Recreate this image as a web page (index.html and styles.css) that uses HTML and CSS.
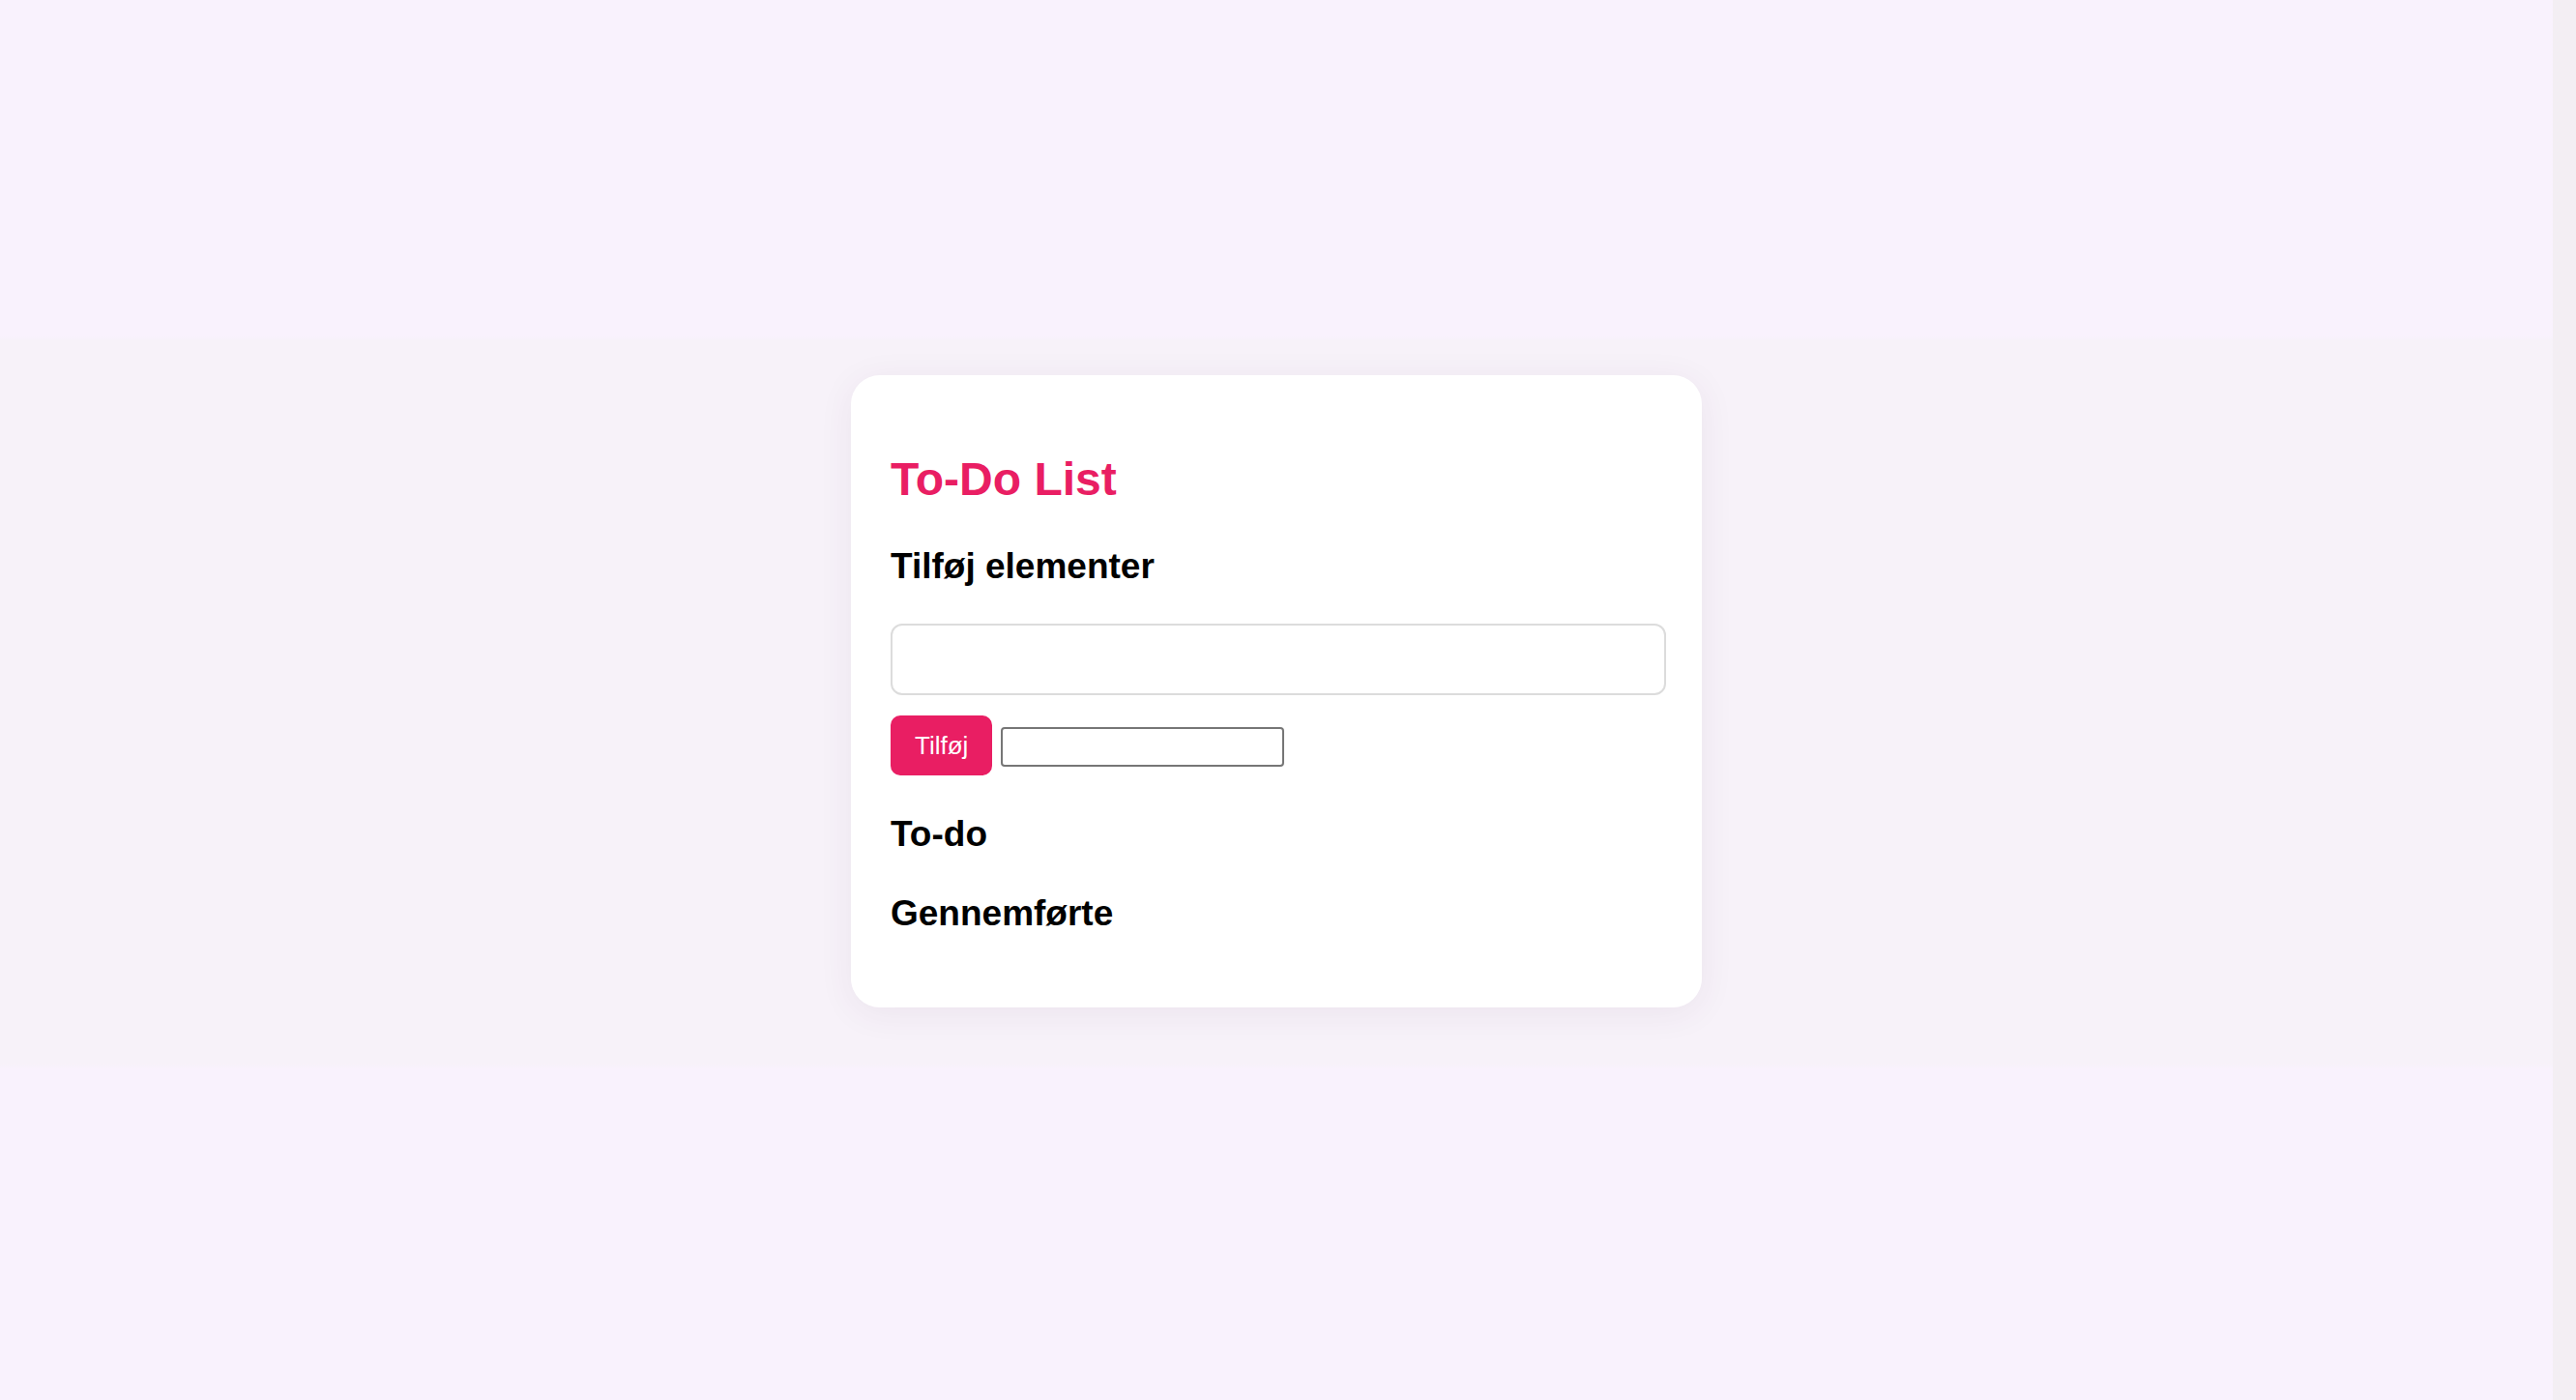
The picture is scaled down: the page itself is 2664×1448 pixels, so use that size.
FILE: index.html
```html
<!DOCTYPE html>
<html lang="da">
<head>
<meta charset="utf-8">
<title>To-Do List</title>
<link rel="stylesheet" href="styles.css">
</head>
<body>
<main class="page">
  <section class="card">
    <h1 class="title">To-Do List</h1>
    <h2 class="heading heading-add">Tilføj elementer</h2>
    <input class="big-input" type="text">
    <div class="row">
      <button class="add-btn" type="button">Tilføj</button>
      <input class="small-input" type="text">
    </div>
    <h2 class="heading heading-list">To-do</h2>
    <ul class="list"></ul>
    <h2 class="heading heading-list">Gennemførte</h2>
    <ul class="list"></ul>
  </section>
</main>
<div class="edge"></div>
</body>
</html>
```

FILE: styles.css
```css
html, body {
  margin: 0;
  padding: 0;
}

body {
  display: flex;
  min-height: 100vh;
  font-family: "Liberation Sans", Arial, Helvetica, sans-serif;
  background: linear-gradient(to bottom,
    #f9f2fd 0px,
    #f9f2fd 348px,
    #f7f2f9 352px,
    #f7f2f9 1100px,
    #f9f2fd 1106px,
    #f9f2fd 100%);
}

.page {
  flex: 1;
  display: flex;
  justify-content: center;
  align-items: flex-start;
  padding-top: 388px;
}

.edge {
  width: 24px;
  background: #f3eef3;
}

.card {
  width: 880px;
  box-sizing: border-box;
  padding: 80px 37px 76px 41px;
  background: #ffffff;
  border-radius: 30px;
  box-shadow: 0 6px 36px rgba(90, 40, 90, 0.07);
}

.title {
  margin: 0;
  font-size: 48px;
  line-height: 56px;
  font-weight: 700;
  color: #e91e63;
}

.heading {
  margin: 0;
  font-size: 37px;
  line-height: 43px;
  font-weight: 700;
  color: #000;
}

.heading-add {
  margin-top: 40px;
}

.heading-list {
  margin-top: 39px;
}

.big-input {
  display: block;
  box-sizing: border-box;
  width: 802px;
  height: 74px;
  margin: 38px 0 0;
  border: 2px solid #dcdcdc;
  border-radius: 12px;
  background: #fff;
  outline: none;
}

.row {
  display: flex;
  align-items: flex-start;
  gap: 9px;
  margin-top: 21px;
}

.add-btn {
  box-sizing: border-box;
  height: 62px;
  padding: 0 25px;
  border: none;
  border-radius: 10px;
  background: #e91e63;
  color: #fff;
  font-family: "Liberation Sans", Arial, Helvetica, sans-serif;
  font-size: 26px;
}

.small-input {
  box-sizing: border-box;
  width: 293px;
  height: 41px;
  margin-top: 12px;
  border: 2px solid #767676;
  border-radius: 4px;
  background: #fff;
}

.list {
  margin: 0;
  padding: 0;
}
```
